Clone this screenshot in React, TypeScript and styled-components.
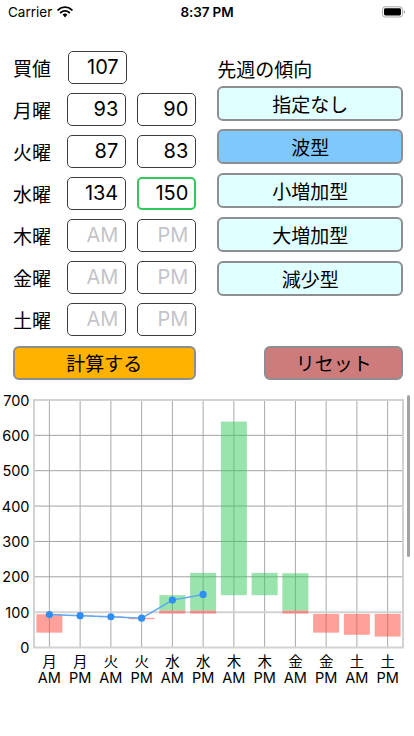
import React from "react";
import styled, { createGlobalStyle } from "styled-components";

const FONT = `Inter, "Noto Sans CJK JP", sans-serif`;

const GlobalStyle = createGlobalStyle`
  html, body {
    margin: 0;
    padding: 0;
    background: #ffffff;
  }
  body {
    font-family: ${FONT};
    color: #000000;
  }
  * {
    box-sizing: border-box;
  }
`;

const Screen = styled.div`
  width: 414px;
  height: 736px;
  overflow: hidden;
  position: relative;
  background: #ffffff;
`;

/* ---------- status bar ---------- */

const StatusBar = styled.div`
  height: 24px;
  display: grid;
  grid-template-columns: 1fr auto 1fr;
  align-items: center;
  padding: 0 8px;
  font-size: 13.5px;
`;

const Carrier = styled.div`
  display: flex;
  align-items: center;
  gap: 5px;
`;

const Clock = styled.div`
  font-weight: 600;
  letter-spacing: -0.1px;
`;

const Battery = styled.div`
  display: flex;
  justify-content: flex-end;
`;

const WifiIcon = () => (
  <svg width="16" height="12" viewBox="0 0 16 12">
    <path d="M8 11.5 L5.6 8.6 A3.6 3.6 0 0 1 10.4 8.6 Z" fill="#000" />
    <path
      d="M3.7 6.6 A6.2 6.2 0 0 1 12.3 6.6"
      stroke="#000"
      strokeWidth="1.9"
      fill="none"
      strokeLinecap="round"
    />
    <path
      d="M1.2 3.9 A9.8 9.8 0 0 1 14.8 3.9"
      stroke="#000"
      strokeWidth="1.9"
      fill="none"
      strokeLinecap="round"
    />
  </svg>
);

const BatteryIcon = () => (
  <svg width="24" height="12" viewBox="0 0 24 12">
    <rect x="0.5" y="0.8" width="20" height="10.2" rx="2.6" fill="none" stroke="#a8a8a8" />
    <rect x="2" y="2.3" width="17" height="7.2" rx="1.4" fill="#000" />
    <path d="M21.8 4.2 Q23.2 4.4 23.2 5.9 Q23.2 7.4 21.8 7.6 Z" fill="#a8a8a8" />
  </svg>
);

/* ---------- form ---------- */

const Form = styled.div`
  display: flex;
  justify-content: space-between;
  padding: 26.7px 10.7px 0 13px;
`;

const PriceColumn = styled.div`
  width: 183.3px;
  display: flex;
  flex-direction: column;
  gap: 9px;
`;

const PriceRow = styled.div`
  height: 33px;
  display: flex;
  align-items: center;
  gap: 11px;
`;

const DayLabel = styled.div`
  width: 43.7px;
  font-size: 19px;
  white-space: nowrap;
`;

const PriceInput = styled.input<{ $focused?: boolean }>`
  width: 59px;
  height: 33px;
  border: ${({ $focused }) => ($focused ? "2px solid #34c759" : "1px solid #3c3c3c")};
  border-radius: 5px;
  font-family: ${FONT};
  font-size: 20px;
  text-align: right;
  padding: 0 ${({ $focused }) => ($focused ? "6px" : "7px")} 0 0;
  color: #000;
  background: #fff;
  outline: none;

  &::placeholder {
    color: #c4c4c8;
  }
`;

const PatternColumn = styled.div`
  width: 186px;
  display: flex;
  flex-direction: column;
`;

const PatternTitle = styled.div`
  height: 35px;
  display: flex;
  align-items: center;
  font-size: 19px;
`;

const PatternList = styled.div`
  display: flex;
  flex-direction: column;
  gap: 8.75px;
`;

const PatternButton = styled.button<{ $selected?: boolean }>`
  height: 35px;
  border: 2px solid #8e8e92;
  border-radius: 6px;
  background: ${({ $selected }) => ($selected ? "#7ec8fb" : "#e0ffff")};
  font-family: ${FONT};
  font-size: 19px;
  color: #000;
  padding: 0;
`;

const ActionRow = styled.div`
  display: flex;
  justify-content: space-between;
  padding: 10px 10.7px 0 12.7px;
`;

const ActionButton = styled.button<{ $bg: string; $width: number }>`
  width: ${({ $width }) => $width}px;
  height: 34.5px;
  border: 2px solid #8e8e92;
  border-radius: 6px;
  background: ${({ $bg }) => $bg};
  font-family: ${FONT};
  font-size: 19px;
  color: #000;
  padding: 0;
`;

/* ---------- chart ---------- */

const ChartWrap = styled.div`
  position: relative;
  margin-top: 10px;
  height: 300px;
`;

const ScrollIndicator = styled.div`
  position: absolute;
  right: 4px;
  top: 5px;
  width: 3px;
  height: 162px;
  border-radius: 2px;
  background: #a3a3a3;
`;

const PLOT_LEFT = 34;
const PLOT_RIGHT = 403;
const PLOT_TOP = 10;
const PLOT_BOTTOM = 257.5;
const COL = (PLOT_RIGHT - PLOT_LEFT) / 12;
const BAR_W = 26;
const RED = "rgba(255, 72, 62, 0.52)";
const GREEN = "rgba(52, 199, 89, 0.5)";

const yOf = (v: number) => PLOT_BOTTOM - (v * (PLOT_BOTTOM - PLOT_TOP)) / 700;
const xOf = (i: number) => PLOT_LEFT + COL * (i + 0.5);

type Bar = { i: number; lo: number; hi: number; color: string };

const bars: Bar[] = [
  { i: 0, lo: 42, hi: 94, color: RED },
  { i: 1, lo: 89, hi: 91, color: RED },
  { i: 2, lo: 85.5, hi: 88, color: RED },
  { i: 3, lo: 80, hi: 84, color: RED },
  { i: 4, lo: 96, hi: 105, color: RED },
  { i: 4, lo: 105, hi: 148, color: GREEN },
  { i: 5, lo: 96, hi: 105, color: RED },
  { i: 5, lo: 105, hi: 211, color: GREEN },
  { i: 6, lo: 148, hi: 639, color: GREEN },
  { i: 7, lo: 148, hi: 211, color: GREEN },
  { i: 8, lo: 96, hi: 105, color: RED },
  { i: 8, lo: 105, hi: 210, color: GREEN },
  { i: 9, lo: 42, hi: 95, color: RED },
  { i: 10, lo: 36, hi: 95, color: RED },
  { i: 11, lo: 31, hi: 95, color: RED },
];

const actual = [93, 90, 87, 83, 134, 150];
const days = ["月", "月", "火", "火", "水", "水", "木", "木", "金", "金", "土", "土"];

const Chart = () => {
  const linePts = actual.map((v, i) => `${xOf(i)},${yOf(v)}`).join(" ");
  return (
    <svg width="414" height="300" viewBox="0 0 414 300" style={{ display: "block" }}>
      {/* grid */}
      {[200, 300, 400, 500, 600].map((v) => (
        <line key={v} x1={PLOT_LEFT} x2={PLOT_RIGHT} y1={yOf(v)} y2={yOf(v)} stroke="#a2a2a2" strokeWidth="1" />
      ))}
      {days.map((_, i) => (
        <line key={i} x1={xOf(i)} x2={xOf(i)} y1={PLOT_TOP} y2={PLOT_BOTTOM} stroke="#a8a8a8" strokeWidth="1" />
      ))}
      <line x1={PLOT_LEFT} x2={PLOT_RIGHT} y1={yOf(100)} y2={yOf(100)} stroke="#d2d2d2" strokeWidth="2" />
      <rect
        x={PLOT_LEFT}
        y={PLOT_TOP}
        width={PLOT_RIGHT - PLOT_LEFT}
        height={PLOT_BOTTOM - PLOT_TOP}
        fill="none"
        stroke="#d2d2d2"
        strokeWidth="2"
      />
      {/* range bars */}
      {bars.map((b, k) => (
        <rect
          key={k}
          x={xOf(b.i) - BAR_W / 2}
          y={yOf(b.hi)}
          width={BAR_W}
          height={yOf(b.lo) - yOf(b.hi)}
          fill={b.color}
        />
      ))}
      {/* actual prices */}
      <polyline points={linePts} fill="none" stroke="#5ea8f6" strokeWidth="1.5" />
      {actual.map((v, i) => (
        <circle key={i} cx={xOf(i)} cy={yOf(v)} r="3.6" fill="#2e8ef3" />
      ))}
      {/* y axis labels */}
      {[0, 100, 200, 300, 400, 500, 600, 700].map((v) => (
        <text
          key={v}
          x="29.5"
          y={yOf(v)}
          textAnchor="end"
          dominantBaseline="central"
          fontSize="14.5"
          fontFamily={FONT}
          fill="#000"
        >
          {v}
        </text>
      ))}
      {/* x axis labels */}
      {days.map((d, i) => (
        <g key={i} fontFamily={FONT} fontSize="14.5" fill="#000" textAnchor="middle">
          <text x={xOf(i)} y="271.7" dominantBaseline="central">
            {d}
          </text>
          <text x={xOf(i)} y="287.6" dominantBaseline="central">
            {i % 2 === 0 ? "AM" : "PM"}
          </text>
        </g>
      ))}
    </svg>
  );
};

/* ---------- app ---------- */

type Row = { label: string; am?: string; pm?: string; single?: boolean; focusPm?: boolean };

const rows: Row[] = [
  { label: "買値", am: "107", single: true },
  { label: "月曜", am: "93", pm: "90" },
  { label: "火曜", am: "87", pm: "83" },
  { label: "水曜", am: "134", pm: "150", focusPm: true },
  { label: "木曜" },
  { label: "金曜" },
  { label: "土曜" },
];

const patterns = ["指定なし", "波型", "小増加型", "大増加型", "減少型"];

export default function App() {
  return (
    <Screen>
      <GlobalStyle />
      <StatusBar>
        <Carrier>
          <span>Carrier</span>
          <WifiIcon />
        </Carrier>
        <Clock>8:37 PM</Clock>
        <Battery>
          <BatteryIcon />
        </Battery>
      </StatusBar>

      <Form>
        <PriceColumn>
          {rows.map((r) => (
            <PriceRow key={r.label}>
              <DayLabel>{r.label}</DayLabel>
              <PriceInput readOnly value={r.am ?? ""} placeholder="AM" />
              {!r.single && (
                <PriceInput readOnly value={r.pm ?? ""} placeholder="PM" $focused={r.focusPm} />
              )}
            </PriceRow>
          ))}
        </PriceColumn>
        <PatternColumn>
          <PatternTitle>先週の傾向</PatternTitle>
          <PatternList>
            {patterns.map((p) => (
              <PatternButton key={p} $selected={p === "波型"}>
                {p}
              </PatternButton>
            ))}
          </PatternList>
        </PatternColumn>
      </Form>

      <ActionRow>
        <ActionButton $bg="#ffb300" $width={183.3}>
          計算する
        </ActionButton>
        <ActionButton $bg="#cd7b7b" $width={139.3}>
          リセット
        </ActionButton>
      </ActionRow>

      <ChartWrap>
        <Chart />
        <ScrollIndicator />
      </ChartWrap>
    </Screen>
  );
}
